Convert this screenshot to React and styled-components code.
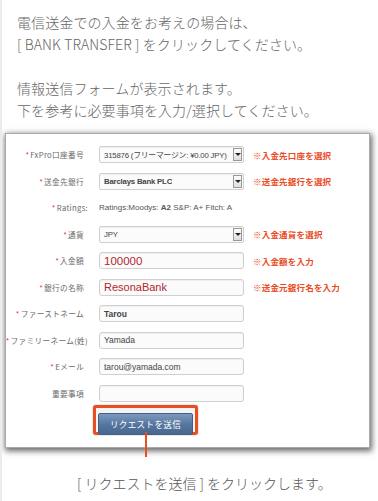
import React from "react";
import styled, { createGlobalStyle } from "styled-components";

const Global = createGlobalStyle`
  html, body { margin: 0; padding: 0; background: #fff; }
  body { width: 378px; height: 501px; overflow: hidden; }
`;

const Page = styled.div`
  width: 378px;
  height: 501px;
  box-sizing: border-box;
  border-left: 2px solid #ececec;
  font-family: "Noto Sans CJK JP", "Noto Sans", sans-serif;
  color: #666;
  overflow: hidden;
`;

const Intro = styled.div`
  padding: 11px 0 0 15px;
  display: flex;
  flex-direction: column;
  gap: 22px;
`;

const Para = styled.p`
  margin: 0;
  font-size: 14px;
  line-height: 22px;
  font-weight: 300;
  color: #666;
  letter-spacing: 0.1px;
`;

const Panel = styled.div`
  margin: 12px 8px 0 3px;
  height: 315px;
  box-sizing: border-box;
  background: #fff;
  border: 1px solid #aaa;
  box-shadow: 1px 2px 6px 1px rgba(0, 0, 0, 0.6);
  padding: 7.5px 0 0 0;
  display: flex;
  flex-direction: column;
`;

const Row = styled.div`
  display: grid;
  grid-template-columns: 93px 145px auto;
  align-items: center;
  height: 26.5px;
`;

const Label = styled.div`
  justify-self: end;
  margin-right: ${(p) => (p.$shift ? "11px" : "15px")};
  font-size: 7.7px;
  color: #6a6a6a;
  white-space: nowrap;
  letter-spacing: 0.3px;
`;

const Star = styled.span`
  color: #d4354a;
  margin-right: 1px;
`;

const Field = styled.div`
  height: 17px;
  box-sizing: border-box;
  border: 1px solid #cfcfcf;
  border-radius: 3px;
  background: #fbfbfb;
  box-shadow: inset 0 1px 1px rgba(0, 0, 0, 0.05);
  display: flex;
  align-items: center;
  padding-left: 4px;
  font-family: "Liberation Sans", Arial, "Noto Sans CJK JP", sans-serif;
  font-size: ${(p) => p.$size || "8.5px"};
  font-weight: ${(p) => (p.$bold ? 700 : 400)};
  color: ${(p) => p.$color || "#444"};
  white-space: nowrap;
  overflow: hidden;
`;

const SelectBox = styled(Field)`
  justify-content: space-between;
  padding-right: 1px;
  border-radius: 2px;
  font-size: 7.8px;
`;

const SelectText = styled.span`
  overflow: hidden;
  min-width: 0;
  letter-spacing: -0.2px;
`;

const Arrow = styled.span`
  width: 9px;
  height: 13px;
  box-sizing: border-box;
  border: 1px solid #9a9a9a;
  background: linear-gradient(#fdfdfd, #dedede);
  display: flex;
  align-items: center;
  justify-content: center;
  flex: none;
  &::after {
    content: "";
    border-left: 3px solid transparent;
    border-right: 3px solid transparent;
    border-top: 3px solid #222;
  }
`;

const Note = styled.div`
  margin-left: 9px;
  font-size: 8.5px;
  font-weight: 700;
  color: #ec4a24;
  white-space: nowrap;
  letter-spacing: 0.2px;
`;

const RatingText = styled.div`
  grid-column: 2 / 4;
  font-family: "Liberation Sans", Arial, sans-serif;
  font-size: 8px;
  color: #555;
  white-space: nowrap;
  b { font-weight: 700; }
`;

const ButtonRow = styled.div`
  display: flex;
  padding-left: 87px;
  margin-top: -2px;
`;

const Highlight = styled.div`
  position: relative;
  width: 105px;
  height: 30px;
  box-sizing: border-box;
  border: 3px solid #e94e1f;
  border-radius: 3px;
  padding: 1px 2px;
  background: #f4f4f4;
  box-shadow: 0 0 2px rgba(0, 0, 0, 0.3);
  &::after {
    content: "";
    position: absolute;
    left: 50%;
    top: 100%;
    width: 2px;
    margin-left: -1px;
    height: 25px;
    background: #e94e1f;
  }
`;

const SendButton = styled.button`
  width: 95px;
  height: 22px;
  margin: 0;
  padding: 0;
  box-sizing: border-box;
  border: 1px solid #3f5f86;
  border-radius: 2px;
  background: linear-gradient(#7c99bd, #55759e 55%, #48688f);
  color: #fff;
  font-family: "Noto Sans CJK JP", sans-serif;
  font-size: 8.6px;
  letter-spacing: 0.3px;
  cursor: pointer;
`;

const Caption = styled.p`
  margin: 24px 0 0 0;
  padding-left: 75px;
  font-size: 14px;
  line-height: 22px;
  font-weight: 300;
  color: #555;
`;

const Req = ({ children, shift }) => (
  <Label $shift={shift}>
    <Star>*</Star>
    {children}
  </Label>
);

export default function App() {
  return (
    <>
      <Global />
      <Page>
        <Intro>
          <Para>
            電信送金での入金をお考えの場合は、
            <br />[ BANK TRANSFER ] をクリックしてください。
          </Para>
          <Para>
            情報送信フォームが表示されます。
            <br />
            下を参考に必要事項を入力/選択してください。
          </Para>
        </Intro>

        <Panel>
          <Row>
            <Req>FxPro口座番号</Req>
            <SelectBox>
              <SelectText>315876 (フリーマージン: ¥0.00 JPY)</SelectText>
              <Arrow />
            </SelectBox>
            <Note>※入金先口座を選択</Note>
          </Row>
          <Row>
            <Req>送金先銀行</Req>
            <SelectBox $bold>
              <SelectText>Barclays Bank PLC</SelectText>
              <Arrow />
            </SelectBox>
            <Note>※送金先銀行を選択</Note>
          </Row>
          <Row>
            <Label $shift>
              <Star>*</Star>Ratings:
            </Label>
            <RatingText>
              Ratings:Moodys: <b>A2</b> S&amp;P: A+ Fitch: A
            </RatingText>
          </Row>
          <Row>
            <Req>通貨</Req>
            <SelectBox>
              <SelectText>JPY</SelectText>
              <Arrow />
            </SelectBox>
            <Note>※入金通貨を選択</Note>
          </Row>
          <Row>
            <Req>入金額</Req>
            <Field $size="11.5px" $color="#b3262d">
              100000
            </Field>
            <Note>※入金額を入力</Note>
          </Row>
          <Row>
            <Req>銀行の名称</Req>
            <Field $size="11px" $color="#b3262d">
              ResonaBank
            </Field>
            <Note>※送金元銀行名を入力</Note>
          </Row>
          <Row>
            <Req>ファーストネーム</Req>
            <Field $bold>Tarou</Field>
          </Row>
          <Row>
            <Req shift>ファミリーネーム(姓)</Req>
            <Field>Yamada</Field>
          </Row>
          <Row>
            <Req>Eメール</Req>
            <Field $size="8.5px">tarou@yamada.com</Field>
          </Row>
          <Row>
            <Label>重要事項</Label>
            <Field />
          </Row>
          <ButtonRow>
            <Highlight>
              <SendButton type="button">リクエストを送信</SendButton>
            </Highlight>
          </ButtonRow>
        </Panel>

        <Caption>[ リクエストを送信 ] をクリックします。</Caption>
      </Page>
    </>
  );
}
